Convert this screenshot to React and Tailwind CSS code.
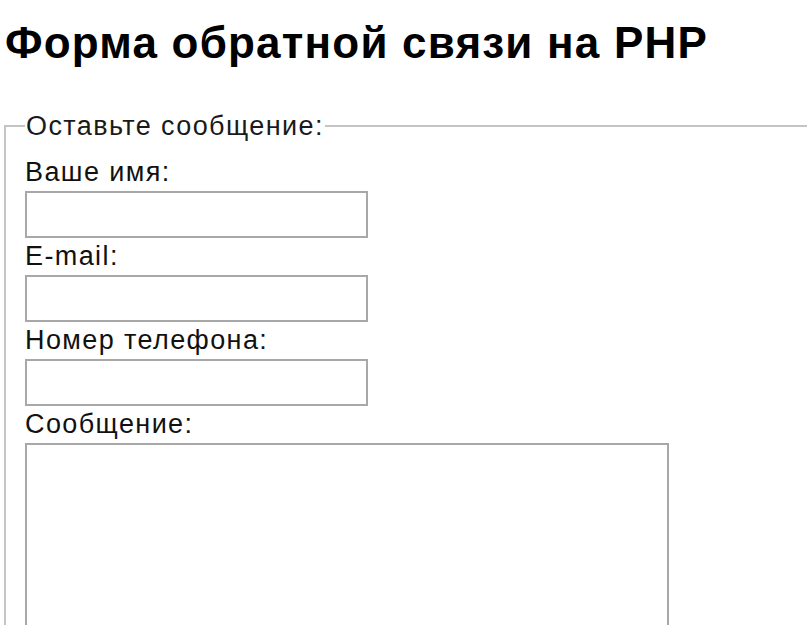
export default function App() {
  return (
    <div className="w-[807px] h-[625px] overflow-hidden bg-white font-['Liberation_Sans',Arial,sans-serif] text-[#111]">
      <h1 className="pl-[5px] pt-[18px] text-[44px] leading-[50px] font-bold tracking-[1.2px] text-black">
        Форма обратной связи на PHP
      </h1>
      <form className="mt-[43px]" onSubmit={(e) => e.preventDefault()}>
        <fieldset className="ml-[4px] w-[860px] border-2 border-[#c4c4c4] pl-[19px] pr-4 pb-4">
          <legend className="px-[1px] text-[27px] leading-[30px] tracking-[1.4px] text-[#1a1a1a]">
            Оставьте сообщение:
          </legend>
          <div className="flex flex-col items-start text-[27px] tracking-[1.4px]">
            <label className="leading-[37px] pt-[13px]">Ваше имя:</label>
            <input type="text" className="w-[343px] h-[47px] border-2 border-[#a8a8a8] bg-white" />
            <label className="leading-[37px]">E-mail:</label>
            <input type="text" className="w-[343px] h-[47px] border-2 border-[#a8a8a8] bg-white" />
            <label className="leading-[37px]">Номер телефона:</label>
            <input type="text" className="w-[343px] h-[47px] border-2 border-[#a8a8a8] bg-white" />
            <label className="leading-[37px]">Сообщение:</label>
            <textarea className="w-[644px] h-[260px] border-2 border-[#a8a8a8] bg-white resize-none" />
          </div>
        </fieldset>
      </form>
    </div>
  )
}
